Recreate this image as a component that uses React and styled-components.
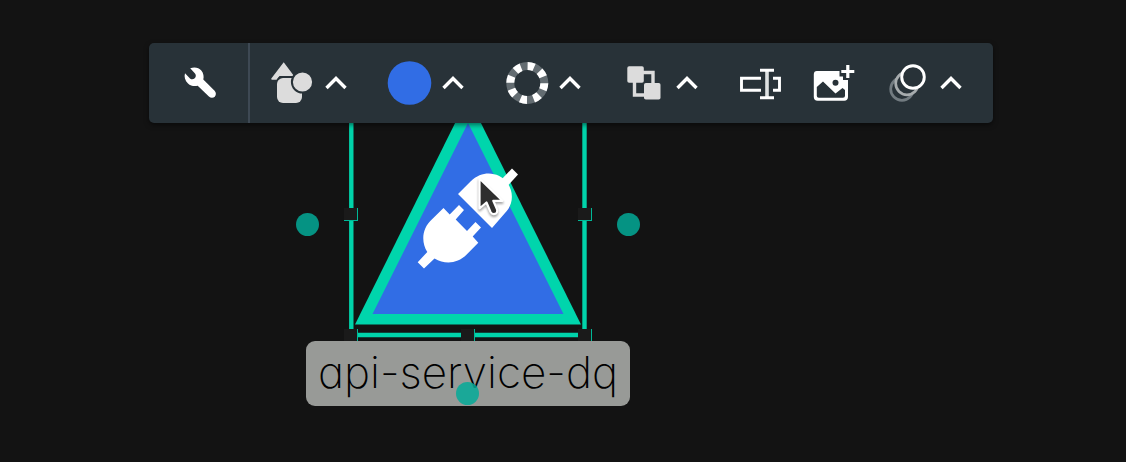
import React from 'react';
import styled, { createGlobalStyle } from 'styled-components';

const GlobalStyle = createGlobalStyle`
  *, *::before, *::after { box-sizing: border-box; }
  body { margin: 0; background: #131313; font-family: Inter, "Liberation Sans", sans-serif; }
`;

const Canvas = styled.main`
  position: relative;
  min-height: 100vh;
  overflow: hidden;
  background: #131313;
`;

const ToolbarArea = styled.header`
  position: relative;
  z-index: 2;
  display: flex;
  padding: 43px 16px 0 149px;
`;

const Toolbar = styled.div`
  display: flex;
  flex: none;
  height: 80px;
  border-radius: 5px;
  background: #283238;
  box-shadow: 0 2px 5px rgba(0, 0, 0, 0.5);
`;

const Section = styled.div`
  display: flex;
  align-items: center;
  gap: ${(p) => p.$gap || 0}px;
  padding: ${(p) => p.$padding};
  border-right: ${(p) => (p.$divided ? '2px solid #3e4954' : '0')};
`;

const Tools = styled.div`
  display: flex;
  align-items: center;
  gap: 30px;
`;

const ToolButton = styled.button`
  display: flex;
  align-items: center;
  gap: ${(p) => p.$gap || 11}px;
  height: 80px;
  padding: 0;
  border: 0;
  background: none;
  color: #fff;
  cursor: pointer;
`;

const Icon = styled.svg`
  display: block;
  flex: none;
  overflow: visible;
`;

const Node = styled.figure`
  position: absolute;
  z-index: 1;
  top: 97px;
  left: 296px;
  width: 344px;
  margin: 0;
  display: flex;
  flex-direction: column;
  align-items: center;
`;

const NodeLabel = styled.figcaption`
  padding: 0 12px;
  height: 65px;
  border-radius: 9px;
  background: #989a97;
  color: #000;
  font-size: 44px;
  font-weight: 200;
  font-feature-settings: "cv11";
  line-height: 62px;
  text-align: center;
  white-space: nowrap;
`;

const Port = styled.span`
  position: absolute;
  top: ${(p) => p.$top}px;
  left: ${(p) => p.$left}px;
  width: 23px;
  height: 23px;
  border-radius: 50%;
  background: rgba(4, 170, 152, 0.85);
`;

const Pointer = styled(Icon)`
  position: absolute;
  z-index: 3;
  top: 175px;
  left: 475px;
  filter: drop-shadow(0 2px 1px rgba(0, 0, 0, 0.35));
`;

const Chevron = () => (
  <Icon width="22" height="14" viewBox="0 0 22 14" fill="none" aria-hidden="true">
    <path d="M1.5 12 11 2.5 20.5 12" stroke="#fff" strokeWidth="3.4" />
  </Icon>
);

const Glyph = ({ children }) => (
  <Icon width="44" height="44" viewBox="0 0 44 44" fill="none" aria-hidden="true">
    {children}
  </Icon>
);

const WrenchIcon = () => (
  <Icon width="32" height="32" viewBox="0 0 32 32" fill="none" aria-hidden="true">
    <path
      fill="#fff"
      d="M6.200 1.200C10.500-.4 14.800.5 17.300 3.400c2.200 2.600 2.800 6 2 9.200L30.600 23.800c1.700 1.700 1.700 4.300.2 5.900-1.600 1.600-4.200 1.500-5.900-.1L13.700 18.700c-3.500 1-7.200.1-9.700-2.300C1 13.600-.1 9.700 1 6.200L6 11.400c1.400 1.300 3.400 1.100 4.700-.2 1.300-1.300 1.600-3.300.3-4.800Z"
    />
  </Icon>
);

const ShapesIcon = () => (
  <Glyph>
    <path d="M13.700 1.200 24 15H9.500l-3 3.800H2.200c-1 0-1.300-.8-.7-1.500Z" fill="#dcdcdc" />
    <rect x="7" y="17" width="25" height="25" rx="6" fill="#dcdcdc" />
    <circle cx="32.500" cy="21" r="10.600" fill="#dcdcdc" stroke="#283238" strokeWidth="2" />
    <path d="M8 18.500Q9 16 13 16H22.500" stroke="#283238" strokeWidth="1.600" />
  </Glyph>
);

const ColorIcon = () => (
  <Glyph>
    <circle cx="22.500" cy="22" r="21.800" fill="#316de5" />
  </Glyph>
);

const BorderIcon = () => (
  <Glyph>
    <circle cx="23.300" cy="22" r="17" stroke="#636c71" strokeWidth="8" />
    <circle
      cx="23.300"
      cy="22"
      r="17"
      stroke="#fff"
      strokeWidth="8"
      pathLength="360"
      strokeDasharray="22.500 22.500"
      transform="rotate(-89 23.300 22)"
    />
  </Glyph>
);

const ArrangeIcon = () => (
  <Glyph>
    <path d="M22 11.500H32v12M13.500 20.500v13.500H24" stroke="#dcdcdc" strokeWidth="3.400" />
    <rect x="6.300" y="5.300" width="16.500" height="16.500" rx="1.800" fill="#dcdcdc" />
    <rect x="23" y="22" width="16.500" height="16.500" rx="1.800" fill="#dcdcdc" />
  </Glyph>
);

const RenameIcon = () => (
  <Glyph>
    <path d="M23 17.300H3.500V29.300H23M35 17.300h6.500V29.300H35" stroke="#fff" strokeWidth="2.900" />
    <path d="M29 9v28" stroke="#dfe2e3" strokeWidth="3.600" />
    <path d="M22 9.300h14M22 36.700h14" stroke="#fff" strokeWidth="3" />
  </Glyph>
);

const ImageIcon = () => (
  <Glyph>
    <path
      fill="#fff"
      fillRule="evenodd"
      d="M4.800 10H27.500v5.500H31V19h5v17c0 2.300-1.500 3.800-3.700 3.800H5.500c-2.300 0-3.700-1.500-3.700-3.800V13.500C1.800 11 3 10 4.800 10ZM4.800 26v8.800q0 2 2 2H31q2 0 2-2v-5.800L30.500 27 23.500 32.500 11 20.500Z"
    />
    <circle cx="23.500" cy="21.700" r="3" fill="#283238" />
    <path d="M35.800 4v13M29.300 10.500h13" stroke="#fff" strokeWidth="3.200" />
  </Glyph>
);

const OpacityIcon = () => (
  <Glyph>
    <circle cx="16" cy="28" r="11.300" fill="#283238" stroke="#727b80" strokeWidth="2.700" />
    <circle cx="21" cy="22.500" r="11.300" fill="#283238" stroke="#a7acae" strokeWidth="2.700" />
    <circle cx="27" cy="16" r="11.300" fill="#283238" stroke="#fff" strokeWidth="2.900" />
  </Glyph>
);

const Handle = ({ x, y }) => (
  <g>
    <rect x={x} y={y} width="14" height="13" fill="#00b796" />
    <rect x={x} y={y} width="13" height="12" fill="#1a1a1a" />
  </g>
);

const Shape = () => (
  <Icon width="344" height="244" viewBox="0 0 344 244" role="img" aria-label="API service">
    <path d="M55.300 0V238H288.500V0" fill="none" stroke="#00d3aa" strokeWidth="4.400" />
    <path d="M172 0 285 227.500H59Z" fill="#00d5ac" />
    <path d="M172 26 267.500 217H76.500Z" fill="#316de5" />
    <Handle x={48} y={111} />
    <Handle x={282} y={111} />
    <Handle x={48} y={232} />
    <Handle x={165} y={232} />
    <Handle x={282} y={232} />
    <g fill="#fff">
      <path d="M162 97 174.500 84.500C188 71 204 77 210 84C217 92 219 106 209 116L196 131Z" />
      <path d="M121.700 165.300 131.300 155C125.500 146 125 132 136.300 122L147.500 111 153.700 117.500 163 108 168 113 159.700 122.500 171 134 179.500 125 185 130.500 176.700 139.500 182.300 145.700 170.700 157.500C161 167 149 167.500 138.500 161.500L128 171.500Z" />
      <path d="M204.500 83.500 216 71.500 222 77.500 211 89.500Z" />
    </g>
  </Icon>
);

const tools = [
  { label: 'Shape', ToolIcon: ShapesIcon },
  { label: 'Fill color', ToolIcon: ColorIcon },
  { label: 'Border', ToolIcon: BorderIcon },
  { label: 'Arrange', ToolIcon: ArrangeIcon },
];

export default function App() {
  return (
    <>
      <GlobalStyle />
      <Canvas>
        <ToolbarArea>
          <Toolbar role="toolbar" aria-label="Node style">
            <Section $padding="0 32px 0 35px" $divided>
              <ToolButton aria-label="Configure"><WrenchIcon /></ToolButton>
            </Section>
            <Section $padding="0 31px 0 20px" $gap={40}>
              {tools.map(({ label, ToolIcon }) => (
                <ToolButton key={label} aria-label={label} aria-haspopup="menu">
                  <ToolIcon />
                  <Chevron />
                </ToolButton>
              ))}
              <Tools>
                <ToolButton aria-label="Rename"><RenameIcon /></ToolButton>
                <ToolButton aria-label="Add image"><ImageIcon /></ToolButton>
                <ToolButton aria-label="Opacity" aria-haspopup="menu" $gap={10}>
                  <OpacityIcon />
                  <Chevron />
                </ToolButton>
              </Tools>
            </Section>
          </Toolbar>
        </ToolbarArea>

        <Node>
          <Shape />
          <NodeLabel>api-service-dq</NodeLabel>
          <Port $top={116} $left={0} />
          <Port $top={116} $left={321} />
          <Port $top={285} $left={160} />
        </Node>

        <Pointer width="30" height="42" viewBox="0 0 30 42" aria-hidden="true">
          <path
            d="M4.500 3.500V33.500L11.500 27.500 15.500 37Q17.500 40.200 21 38.500 23 36.800 21.800 33.800L18.300 25.800H27.500Z"
            fill="#2e2e2e"
            stroke="#fff"
            strokeWidth="2.200"
            strokeLinejoin="round"
          />
        </Pointer>
      </Canvas>
    </>
  );
}
